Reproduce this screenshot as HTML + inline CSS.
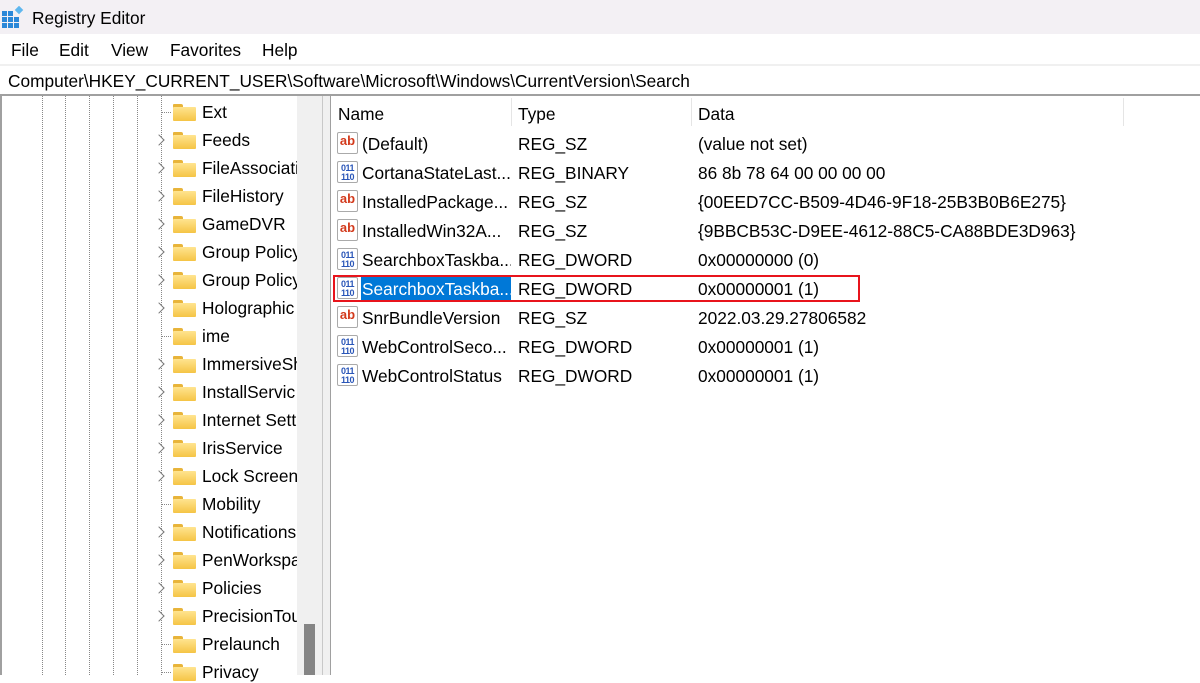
<!DOCTYPE html><html><head><style>
*{margin:0;padding:0;box-sizing:border-box}
body{width:1200px;height:675px;overflow:hidden;background:#fff;font-family:"Liberation Sans",sans-serif;font-size:17.3px;color:#000;position:relative}
.a{position:absolute;white-space:nowrap}
.dv{position:absolute;top:96px;height:579px;border-left:1px dotted #888}
.fold{position:absolute;width:23px;height:17px;left:173px}
.fold:before{content:"";position:absolute;left:0;top:0;width:10px;height:4px;background:#e8b43a;border-radius:1px 2px 0 0}
.fold:after{content:"";position:absolute;left:0;top:3px;width:23px;height:14px;background:linear-gradient(#ffe490,#f5c445);border-radius:1px}
.chev{position:absolute;left:155px;width:8px;height:8px;border-right:1.5px solid #777;border-top:1.5px solid #777;transform:rotate(45deg);background:#fff}
.ico{position:absolute;left:337px;width:21px;height:22px;background:#fff;border:1px solid #aaa;border-radius:2px;font-weight:bold;font-size:13px;line-height:16px;text-align:center}
.ab{color:#d33a1c}
.bin{color:#2a56b8;font-size:9px;line-height:9px;letter-spacing:-.5px}
</style></head><body>
<div class="a" style="left:0;top:0;width:1200px;height:34px;background:#f3f0f4"></div>
<div class="a" style="left:2px;top:6px;width:22px;height:22px">
<svg width="22" height="22"><g fill="#2b88d8"><rect x="0" y="5" width="5" height="5"/><rect x="6" y="5" width="5" height="5"/><rect x="0" y="11" width="5" height="5"/><rect x="6" y="11" width="5" height="5"/><rect x="12" y="11" width="5" height="5"/><rect x="0" y="17" width="5" height="5"/><rect x="6" y="17" width="5" height="5"/><rect x="12" y="17" width="5" height="5"/></g><rect x="14" y="1" width="6" height="6" fill="#5fb7ee" transform="rotate(45 17 4)"/></svg></div>
<div class="a" style="left:32px;top:8px;font-size:17.3px">Registry Editor</div>
<div class="a" style="left:11px;top:40px">File</div>
<div class="a" style="left:59px;top:40px">Edit</div>
<div class="a" style="left:111px;top:40px">View</div>
<div class="a" style="left:170px;top:40px">Favorites</div>
<div class="a" style="left:262px;top:40px">Help</div>
<div class="a" style="left:0;top:64px;width:1200px;height:2px;background:#f0f0f0"></div>
<div class="a" style="left:8px;top:71px">Computer\HKEY_CURRENT_USER\Software\Microsoft\Windows\CurrentVersion\Search</div>
<div class="a" style="left:0;top:94px;width:1200px;height:2px;background:#a0a0a0"></div>
<div class="a" style="left:0;top:96px;width:2px;height:579px;background:#a0a0a0"></div>
<div class="dv" style="left:42px"></div><div class="dv" style="left:65px"></div><div class="dv" style="left:89px"></div><div class="dv" style="left:113px"></div><div class="dv" style="left:137px"></div><div class="dv" style="left:161px"></div>
<div class="a" style="left:297px;top:96px;width:25px;height:579px;background:#f0f0f0"></div>
<div class="a" style="left:304px;top:624px;width:11px;height:51px;background:#858585"></div>
<div class="a" style="left:322px;top:96px;width:9px;height:579px;background:#f0f0f0;border-left:1px solid #c8c8c8;border-right:1px solid #a0a0a0"></div>
<div class="a" style="left:331px;top:96px;width:869px;height:579px;background:#fff"></div>
<div class="a" style="left:361px;top:276px;width:150px;height:25px;background:#0078d7"></div>
<div class="a" style="left:333px;top:275px;width:527px;height:27px;border:2px solid #e8141c"></div>
<div id="tree"></div>
<div class="a" style="left:338px;top:104px">Name</div>
<div class="a" style="left:518px;top:104px">Type</div>
<div class="a" style="left:698px;top:104px">Data</div>
<div class="a" style="left:511px;top:98px;width:1px;height:28px;background:#e5e5e5"></div>
<div class="a" style="left:691px;top:98px;width:1px;height:28px;background:#e5e5e5"></div>
<div class="a" style="left:1123px;top:98px;width:1px;height:28px;background:#e5e5e5"></div>
<script>
var t=["Ext","Feeds","FileAssociati","FileHistory","GameDVR","Group Policy","Group Policy","Holographic","ime","ImmersiveSh","InstallServic","Internet Sett","IrisService","Lock Screen","Mobility","Notifications","PenWorkspa","Policies","PrecisionTou","Prelaunch","Privacy"];
var nc={0:1,8:1,14:1,19:1,20:1},h="";
t.forEach(function(s,i){var y=102+i*28;h+='<div class="fold" style="top:'+(y+2)+'px"></div>';if(!nc[i])h+='<div class="chev" style="top:'+(y+6)+'px"></div>';else h+='<div class="a" style="left:161px;top:'+(y+10)+'px;width:10px;border-top:1px dotted #888"></div>';h+='<div class="a" style="left:202px;top:'+y+'px;width:95px;overflow:hidden">'+s+'</div>';});
var r=[["ab","(Default)","REG_SZ","(value not set)"],["b","CortanaStateLast...","REG_BINARY","86 8b 78 64 00 00 00 00"],["ab","InstalledPackage...","REG_SZ","{00EED7CC-B509-4D46-9F18-25B3B0B6E275}"],["ab","InstalledWin32A...","REG_SZ","{9BBCB53C-D9EE-4612-88C5-CA88BDE3D963}"],["b","SearchboxTaskba...","REG_DWORD","0x00000000 (0)"],["b","SearchboxTaskba...","REG_DWORD","0x00000001 (1)"],["ab","SnrBundleVersion","REG_SZ","2022.03.29.27806582"],["b","WebControlSeco...","REG_DWORD","0x00000001 (1)"],["b","WebControlStatus","REG_DWORD","0x00000001 (1)"]];
r.forEach(function(x,i){var y=134+i*29;h+=x[0]=="ab"?'<div class="ico ab" style="top:'+(y-2)+'px">ab</div>':'<div class="ico bin" style="top:'+(y-2)+'px;padding-top:2px">011<br>110</div>';h+='<div class="a" style="left:362px;top:'+y+'px;width:149px;overflow:hidden;color:'+(i==5?'#fff':'#000')+'">'+x[1]+'</div><div class="a" style="left:518px;top:'+y+'px">'+x[2]+'</div><div class="a" style="left:698px;top:'+y+'px">'+x[3]+'</div>';});
document.getElementById("tree").outerHTML=h;
</script>
</body></html>
